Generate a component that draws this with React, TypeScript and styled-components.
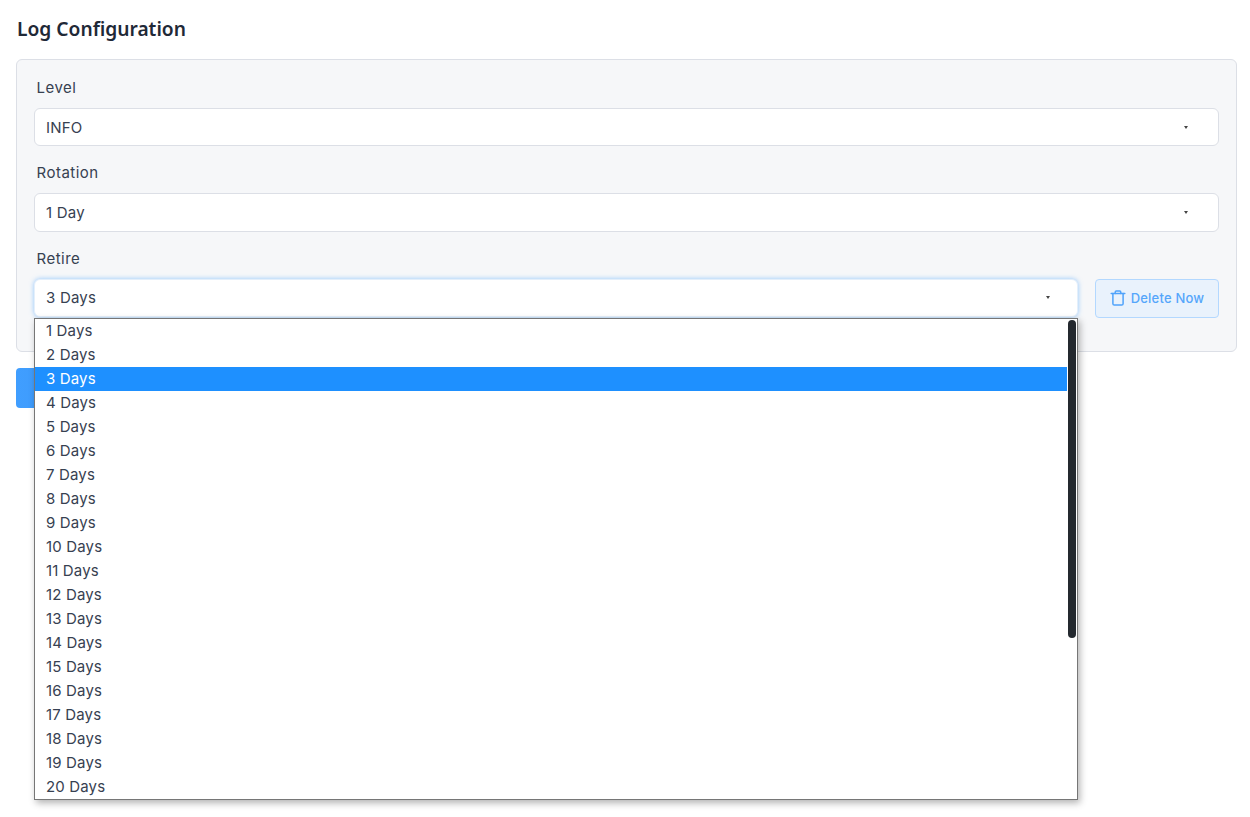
import React from "react";
import styled, { createGlobalStyle } from "styled-components";

const Global = createGlobalStyle`
  html, body { margin: 0; padding: 0; background: #fff; }
  body { font-family: "Inter", "Noto Sans", sans-serif; color: #303133; }
`;

const Page = styled.div`
  box-sizing: border-box;
  min-height: 817px;
  padding: 18px 13px 0 16px;
`;
const Title = styled.h2`
  margin: 0 0 19px 1px;
  font: 600 19.2px/22px "Noto Sans", sans-serif;
  color: #1f2937;
`;
const Panel = styled.section`
  box-sizing: border-box;
  height: 293px;
  padding: 16px 17px 0;
  background: #f6f7f9;
  border: 1px solid #dcdfe6;
  border-radius: 6px;
`;
const Field = styled.div`
  margin-bottom: 15px;
`;
const Label = styled.label`
  display: block;
  height: 24px;
  margin: 0 0 8px 2.5px;
  font-size: 15px;
  line-height: 24px;
  letter-spacing: 0.5px;
  color: #374151;
`;
const Row = styled.div`
  display: flex;
  gap: 17px;
  align-items: flex-start;
`;
const SelectWrap = styled.div`
  position: relative;
  flex: 1;
`;
const Select = styled.div<{ $focused?: boolean }>`
  box-sizing: border-box;
  height: 38.4px;
  display: flex;
  align-items: center;
  justify-content: space-between;
  padding: 0 ${(p) => (p.$focused ? "27px" : "30px")} 0 11px;
  background: #fff;
  border: 1px solid ${(p) => (p.$focused ? "#e4effb" : "#dcdfe6")};
  border-radius: 6px;
  font-size: 15px;
  letter-spacing: 0.2px;
  color: #374151;
  box-shadow: ${(p) => (p.$focused ? "0 0 5px rgba(64,158,255,.55)" : "none")};
`;
const Arrow = styled.span`
  width: 0;
  height: 0;
  border-left: 2.5px solid transparent;
  border-right: 2.5px solid transparent;
  border-top: 3px solid #444;
`;
const DeleteButton = styled.button`
  box-sizing: border-box;
  flex: none;
  width: 124px;
  height: 39px;
  display: flex;
  align-items: center;
  justify-content: center;
  gap: 5px;
  padding: 0;
  background: #e9f2fc;
  border: 1px solid #b3d8ff;
  border-radius: 4px;
  color: #55a6fb;
  font: 500 13px "Inter", sans-serif;
  letter-spacing: 0.2px;
`;
const Dropdown = styled.div`
  position: absolute;
  z-index: 2;
  left: 0;
  right: 0;
  top: 39px;
  box-sizing: border-box;
  height: 482px;
  padding: 0 10px 0 0;
  overflow: hidden;
  background: #fff;
  border: 1px solid #767676;
  box-shadow: 2px 3px 7px rgba(0, 0, 0, 0.3);
`;
const Option = styled.div<{ $selected?: boolean }>`
  height: 24px;
  padding-left: 11px;
  font-size: 15px;
  line-height: 24px;
  letter-spacing: 0.15px;
  color: ${(p) => (p.$selected ? "#fff" : "#374151")};
  background: ${(p) => (p.$selected ? "#1e90ff" : "transparent")};
`;
const Thumb = styled.div`
  position: absolute;
  top: 1px;
  right: 1px;
  width: 8px;
  height: 318px;
  border-radius: 4px;
  background: #24292f;
`;
const SaveButton = styled.button`
  display: block;
  width: 100px;
  height: 40px;
  margin-top: 16px;
  padding: 0;
  border: 0;
  border-radius: 4px;
  background: linear-gradient(90deg, #409eff, #3a95f5);
`;

const days = Array.from({ length: 20 }, (_, i) => `${i + 1} Days`);

const TrashIcon = () => (
  <svg width="16" height="16" viewBox="0 0 16 16" fill="none" stroke="#4fa3fb" strokeWidth="1.5" strokeLinecap="round" strokeLinejoin="round">
    <path d="M1.2 3.4h13.6" />
    <path d="M5.2 3.4V2.2c0-.7.4-1.1 1.1-1.1h3.4c.7 0 1.1.4 1.1 1.1v1.2" />
    <path d="M2.9 3.4v10.3c0 .9.5 1.4 1.4 1.4h7.4c.9 0 1.4-.5 1.4-1.4V3.4" />
  </svg>
);

export default function App() {
  return (
    <Page>
      <Global />
      <Title>Log Configuration</Title>
      <Panel>
        <Field>
          <Label>Level</Label>
          <Select>INFO<Arrow /></Select>
        </Field>
        <Field>
          <Label>Rotation</Label>
          <Select>1 Day<Arrow /></Select>
        </Field>
        <Field>
          <Label>Retire</Label>
          <Row>
            <SelectWrap>
              <Select $focused>3 Days<Arrow /></Select>
              <Dropdown>
                {days.map((d) => (
                  <Option key={d} $selected={d === "3 Days"}>{d}</Option>
                ))}
                <Thumb />
              </Dropdown>
            </SelectWrap>
            <DeleteButton><TrashIcon />Delete Now</DeleteButton>
          </Row>
        </Field>
      </Panel>
      <SaveButton aria-label="Save" />
    </Page>
  );
}
